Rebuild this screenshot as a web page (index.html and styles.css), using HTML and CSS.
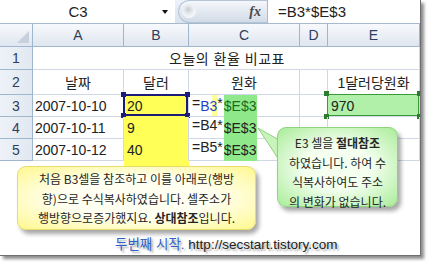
FILE: index.html
```html
<html>
<head>
  <link rel="stylesheet" href="styles.css">
</head>
<body>
<div class="page">
  <div class="fbar">
    <div class="namebox">C3<span class="drop"></span></div>
    <div class="fxzone"><span class="knob"></span><i class="fx">fx</i></div>
    <div class="finput">=B3*$E$3</div>
  </div>

  <div class="sheet">
    <div class="hd corner">
      <svg width="14" height="14" viewBox="0 0 14 14"><polygon points="13,1 13,13 1,13" fill="#c6d0de"/></svg>
    </div>
    <div class="hd">A</div>
    <div class="hd">B</div>
    <div class="hd">C</div>
    <div class="hd">D</div>
    <div class="hd">E</div>

    <div class="rn">1</div>
    <div class="c title">오늘의 환율 비교표</div>

    <div class="rn">2</div>
    <div class="c ctr">날짜</div>
    <div class="c ctr">달러</div>
    <div class="c ctr">원화</div>
    <div class="c"></div>
    <div class="c ctr">1달러당원화</div>

    <div class="rn">3</div>
    <div class="c">2007-10-10</div>
    <div class="c yel">20
      <div class="selbox sel-b"><i class="h tl"></i><i class="h tr"></i><i class="h bl"></i><i class="h br"></i></div>
    </div>
    <div class="c fml">=<span class="ref">B3</span>*<span class="abs first">$E$3</span></div>
    <div class="c"></div>
    <div class="c lime">970
      <div class="selbox sel-e"><i class="h tl"></i><i class="h tr"></i><i class="h bl"></i><i class="h br"></i></div>
    </div>

    <div class="rn">4</div>
    <div class="c">2007-10-11</div>
    <div class="c yel">9</div>
    <div class="c fml">=B4*<span class="abs">$E$3</span></div>
    <div class="c"></div>
    <div class="c"></div>

    <div class="rn">5</div>
    <div class="c">2007-10-12</div>
    <div class="c yel">40</div>
    <div class="c fml">=B5*<span class="abs">$E$3</span></div>
    <div class="c"></div>
    <div class="c"></div>
  </div>

  <div class="below">
    <div class="credit"><span class="blog">두번째 시작.</span> http://secstart.tistory.com</div>
  </div>

  <!-- callouts laid over the sheet -->
  <div class="ytail"></div>
  <div class="note note-y">
    처음 B3셀을 참조하고 이를 아래로(행방<br>
    향)으로 수식복사하였습니다. 셀주소가<br>
    행방향으로증가했지요. <b>상대참조</b>입니다.
  </div>

  <svg class="gtail" width="24" height="36" viewBox="0 0 24 36">
    <polygon points="2,2 23,14 23,34" fill="#c8f4bc" stroke="#8fd27f" stroke-width="1"/>
  </svg>
  <div class="note note-g">
    E3 셀을 <b>절대참조</b><br>
    하였습니다. 하여 수<br>
    식복사하여도 주소<br>
    의 변화가 없습니다.
  </div>
</div>
</body>
</html>
```

FILE: styles.css
```css
body {
  margin: 0;
  font-family: "Liberation Sans", "Noto Sans CJK KR", sans-serif;
  color: #222;
  background: #fff;
}

.page {
  position: relative;
  width: 421px;
  height: 256px;
  box-sizing: border-box;
  border-right: 1px solid #6f6f6f;
  border-bottom: 1px solid #6f6f6f;
  box-shadow: 3px 3px 3px rgba(0, 0, 0, .45);
  background: #fff;
  overflow: hidden;
}

/* formula bar */
.fbar {
  display: flex;
  height: 24px;
  box-sizing: border-box;
  background: linear-gradient(#edf2f9, #d9e2ee);
  border-bottom: 1px solid #a7b9cf;
}

.namebox {
  position: relative;
  width: 175px;
  padding-right: 19px;
  box-sizing: border-box;
  background: #fff;
  text-align: center;
  font-size: 15px;
  line-height: 23px;
}

.drop {
  position: absolute;
  right: 7px;
  top: 10px;
  border-left: 3px solid transparent;
  border-right: 3px solid transparent;
  border-top: 4px solid #111;
}

.fxzone {
  position: relative;
  width: 89px;
  margin-left: 3px;
  border-radius: 12px 0 0 12px;
  background: linear-gradient(#f4f7fb, #d2dbe7);
  border: 1px solid #b6c4d6;
  border-right: none;
  box-sizing: border-box;
}

.knob {
  position: absolute;
  left: 3px;
  top: 3px;
  width: 14px;
  height: 14px;
  border-radius: 50%;
  background: radial-gradient(circle at 45% 40%, #c9cdd2 0, #e8ecf1 40%, #f6f8fb 70%);
}

.fx {
  position: absolute;
  right: 6px;
  top: 3px;
  font-family: "Liberation Serif", serif;
  font-size: 14px;
  font-weight: bold;
  color: #4a4a4a;
}

.finput {
  flex: 1;
  background: #fff;
  border-left: 1px solid #a7b9cf;
  padding-left: 10px;
  font-size: 15px;
  line-height: 23px;
}

/* worksheet */
.sheet {
  display: grid;
  grid-template-columns: 33px 91px 65px 111px 28px 92px;
  grid-template-rows: 23px 23px 25px 22px 22px 22px;
}

.hd, .rn {
  display: flex;
  align-items: center;
  justify-content: center;
  box-sizing: border-box;
  border-right: 1px solid #9eb6ce;
  border-bottom: 1px solid #9eb6ce;
  background: linear-gradient(#f7f9fc, #dfe6ef);
  font-size: 14px;
  color: #2c3f5c;
}

.rn {
  background: linear-gradient(90deg, #eef2f8, #e2e8f1);
}

.corner {
  justify-content: flex-end;
  align-items: flex-end;
  padding: 0 2px 2px 0;
}

.c {
  position: relative;
  display: flex;
  align-items: center;
  box-sizing: border-box;
  padding-left: 2px;
  border-right: 1px solid #d0d7e5;
  border-bottom: 1px solid #d0d7e5;
  font-size: 14px;
  white-space: nowrap;
}

.ctr {
  justify-content: center;
  padding-left: 0;
}

.title {
  grid-column: span 5;
  justify-content: center;
  letter-spacing: .5px;
}

.yel {
  background: #ffff57;
  border-bottom-color: #ffff57;
  padding-left: 3px;
}

.lime {
  background: #b0f0a8;
  padding-left: 3px;
}

.fml {
  align-items: stretch;
  padding-left: 3px;
}

.fml span {
  display: flex;
  align-items: center;
}

.ref {
  color: #1f3fd0;
  box-shadow: inset -5px 0 0 #ffff9a;
}

.abs {
  margin-left: 1px;
  padding-right: 1px;
  background: #8fe98a;
  box-shadow: 0 1px 0 #8fe98a;
}

.abs.first {
  color: #1c6b1c;
}

.selbox {
  position: absolute;
  left: -1px;
  top: -1px;
  right: 0;
  bottom: 0;
  border: 2px solid #1b1b78;
}

.sel-e {
  border: 1px solid #3a9a3a;
}

.h {
  position: absolute;
  width: 5px;
  height: 5px;
  background: #1b1b78;
}

.sel-e .h {
  background: #2a7d2a;
}

.tl { left: -4px; top: -4px; }
.tr { right: -4px; top: -4px; }
.bl { left: -4px; bottom: -4px; }
.br { right: -4px; bottom: -4px; }

/* lower area */
.below {
  padding: 77px 0 0 115px;
}

.credit {
  font-size: 13.5px;
  line-height: 14px;
  color: #222;
  text-shadow: 2px 2px 2px rgba(0, 0, 0, .35);
}

.blog {
  color: #3060c8;
}

/* callouts */
.note {
  position: absolute;
  box-sizing: border-box;
  font-family: "Noto Sans CJK KR", "Liberation Sans", sans-serif;
  font-size: 12px;
  line-height: 19.5px;
  text-align: center;
  white-space: nowrap;
  color: #262626;
  border-radius: 9px;
  box-shadow: 3px 4px 4px rgba(0, 0, 0, .35);
}

.note b {
  font-weight: bold;
}

.note-y {
  left: 17px;
  top: 166px;
  width: 239px;
  height: 64px;
  padding-top: 2px;
  border: 1px solid #e9dc6a;
  background: radial-gradient(ellipse at center, #fffff2 45%, #fff88e 100%);
}

.ytail {
  position: absolute;
  left: 124px;
  top: 161px;
  width: 65px;
  height: 7px;
  background: #ffff57;
}

.note-g {
  left: 277px;
  top: 127px;
  width: 121px;
  height: 80px;
  padding-top: 5px;
  border: 1px solid #8fd27f;
  background: radial-gradient(ellipse at center, #f4fff0 40%, #a9ec98 100%);
}

.gtail {
  position: absolute;
  left: 256px;
  top: 126px;
}
```
